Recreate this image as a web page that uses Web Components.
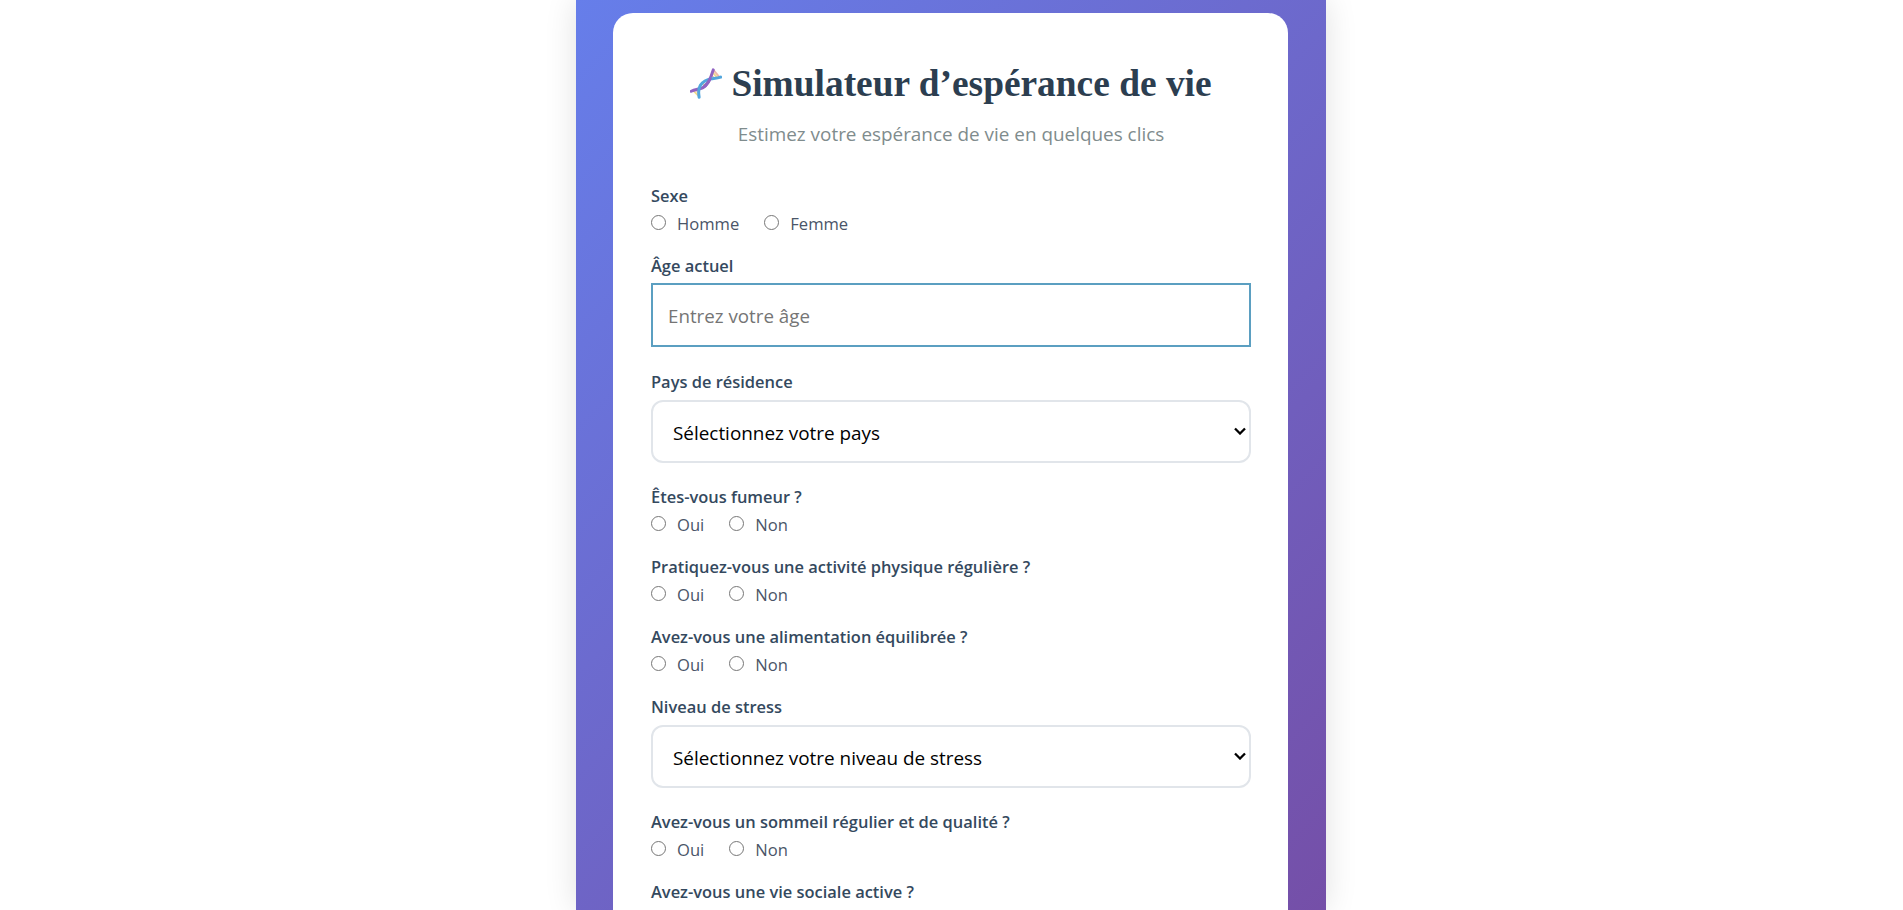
<!DOCTYPE html>
<html lang="fr">
<head>
<meta charset="utf-8">
<title>Simulateur d'espérance de vie</title>
<style>
html, body { margin: 0; height: 100%; overflow: hidden; background: #fff; }
body { font-family: "Open Sans", "Noto Sans", sans-serif; }
</style>
</head>
<body>
<sim-page>
  <sim-card>
    <sim-header title="Simulateur d’espérance de vie" subtitle="Estimez votre espérance de vie en quelques clics"></sim-header>
    <radio-field label="Sexe" name="sexe" options="Homme,Femme"></radio-field>
    <input-field label="Âge actuel" placeholder="Entrez votre âge"></input-field>
    <select-field label="Pays de résidence" placeholder="Sélectionnez votre pays"></select-field>
    <radio-field label="Êtes-vous fumeur ?" name="fumeur" options="Oui,Non"></radio-field>
    <radio-field label="Pratiquez-vous une activité physique régulière ?" name="sport" options="Oui,Non"></radio-field>
    <radio-field label="Avez-vous une alimentation équilibrée ?" name="alimentation" options="Oui,Non"></radio-field>
    <select-field label="Niveau de stress" placeholder="Sélectionnez votre niveau de stress"></select-field>
    <radio-field label="Avez-vous un sommeil régulier et de qualité ?" name="sommeil" options="Oui,Non"></radio-field>
    <radio-field label="Avez-vous une vie sociale active ?" name="social"></radio-field>
  </sim-card>
</sim-page>

<script>
'use strict';

class SimPage extends HTMLElement {
  constructor() {
    super();
    this.attachShadow({mode: 'open'}).innerHTML = `
<style>
:host {
  display: block;
  box-sizing: border-box;
  width: 750px;
  height: 910px;
  margin: 0 0 0 576px;
  padding: 13px 38px 0 37px;
  overflow: hidden;
  background: linear-gradient(135deg, #667eea 0%, #764ba2 100%) no-repeat;
  background-size: 100% 1050px;
  box-shadow: 0 0 30px rgba(0, 0, 0, .12);
}
</style>
<slot></slot>`;
  }
}

class SimCard extends HTMLElement {
  constructor() {
    super();
    this.attachShadow({mode: 'open'}).innerHTML = `
<style>
:host {
  display: block;
  background: #fff;
  border-radius: 20px;
  padding: 37px 37px 37px 38px;
}
</style>
<slot></slot>`;
  }
}

class SimHeader extends HTMLElement {
  constructor() {
    super();
    this.attachShadow({mode: 'open'}).innerHTML = `
<style>
:host { display: block; text-align: center; height: 135px; }
h1 {
  display: flex;
  justify-content: center;
  align-items: center;
  gap: 9px;
  margin: 0;
  height: 68px;
  font: 700 37.4px/68px "Liberation Serif", serif;
  color: #2c3e50;
}
svg { width: 32px; height: 32px; flex: none; }
p {
  margin: 4px 0 0;
  font-size: 18.9px;
  line-height: 24px;
  color: #7f8c8d;
}
</style>
<h1>
  <svg viewBox="0 0 34 34" fill="none" stroke-linecap="round" aria-hidden="true">
    <g stroke-width="2">
      <path d="M23.800 4.500L29 10.300M3.500 24L9 29.500" stroke="#f2d98c"/>
      <path d="M25.500 2.800L31.500 10M22.500 7.500L25.500 10.800M6.500 23.300L9 26" stroke="#f0b8a8"/>
      <path d="M13 15.500L16 19" stroke="#f2d98c"/>
    </g>
    <path d="M1.300 24.700C5 23 9.500 22.500 13.500 21C19.500 18.500 22.500 9.500 24.700 2" stroke="#9063c2" stroke-width="3.200"/>
    <path d="M9.700 31C8.800 26 8.800 22 11 18.500C13.500 14.500 18 12 23 11.300C26 10.900 29.500 10.700 32.500 9.700" stroke="#52a6dd" stroke-width="3.200"/>
    <path d="M14.800 20C17.800 18 19.800 15 21.400 11.400" stroke="#9063c2" stroke-width="3.200"/>
  </svg>
  <span>${this.getAttribute('title')}</span>
</h1>
<p>${this.getAttribute('subtitle')}</p>`;
  }
}

const LABEL_CSS = `
.label {
  display: block;
  box-sizing: content-box;
  padding-top: 1px;
  font-weight: 600;
  font-size: 16.45px;
  line-height: 20px;
  color: #34495e;
}`;

class RadioField extends HTMLElement {
  constructor() {
    super();
    const name = this.getAttribute('name');
    const options = (this.getAttribute('options') || '').split(',').filter(Boolean).map((option) => `
  <label><input type="radio" name="${name}"><span>${option}</span></label>`).join('');
    this.attachShadow({mode: 'open'}).innerHTML = `
<style>
:host { display: block; margin-bottom: 21px; }
${LABEL_CSS}
.options {
  display: flex;
  gap: 25px;
  margin-top: 6px;
  height: 22px;
}
label {
  display: flex;
  align-items: center;
  gap: 11px;
  font-size: 16.6px;
  color: #4a5568;
}
input { width: 15px; height: 15px; margin: 0 0 2px; accent-color: #667eea; }
</style>
<span class="label">${this.getAttribute('label')}</span>
<div class="options">${options}</div>`;
  }
}

class InputField extends HTMLElement {
  constructor() {
    super();
    this.attachShadow({mode: 'open'}).innerHTML = `
<style>
:host { display: block; margin-bottom: 24px; }
${LABEL_CSS}
input {
  display: block;
  box-sizing: border-box;
  width: 100%;
  height: 64px;
  margin-top: 7px;
  padding: 0 15px;
  border: 2px solid #5b9fc1;
  border-radius: 0;
  outline: none;
  font: 18.75px "Open Sans", sans-serif;
}
input::placeholder { color: #757575; }
</style>
<span class="label">${this.getAttribute('label')}</span>
<input type="number" placeholder="${this.getAttribute('placeholder')}">`;
  }
}

class SelectField extends HTMLElement {
  constructor() {
    super();
    this.attachShadow({mode: 'open'}).innerHTML = `
<style>
:host { display: block; margin-bottom: 23.5px; }
${LABEL_CSS}
.wrap { position: relative; margin-top: 7.6px; }
select {
  display: block;
  box-sizing: border-box;
  width: 100%;
  height: 63px;
  padding: 3px 16px 0 20px;
  border: 2px solid #e1e5ea;
  border-radius: 12px;
  background: #fff;
  appearance: none;
  font: 18.9px "Open Sans", sans-serif;
  color: #000;
}
svg {
  position: absolute;
  top: 27px;
  right: 5.5px;
  width: 12px;
  height: 8px;
  pointer-events: none;
}
</style>
<span class="label">${this.getAttribute('label')}</span>
<div class="wrap">
  <select><option>${this.getAttribute('placeholder')}</option></select>
  <svg viewBox="0 0 12 8" fill="none" stroke="#000" stroke-width="2.300" aria-hidden="true"><path d="M1 1.500l5 5 5-5"/></svg>
</div>`;
  }
}

customElements.define('sim-page', SimPage);
customElements.define('sim-card', SimCard);
customElements.define('sim-header', SimHeader);
customElements.define('radio-field', RadioField);
customElements.define('input-field', InputField);
customElements.define('select-field', SelectField);
</script>
</body>
</html>
